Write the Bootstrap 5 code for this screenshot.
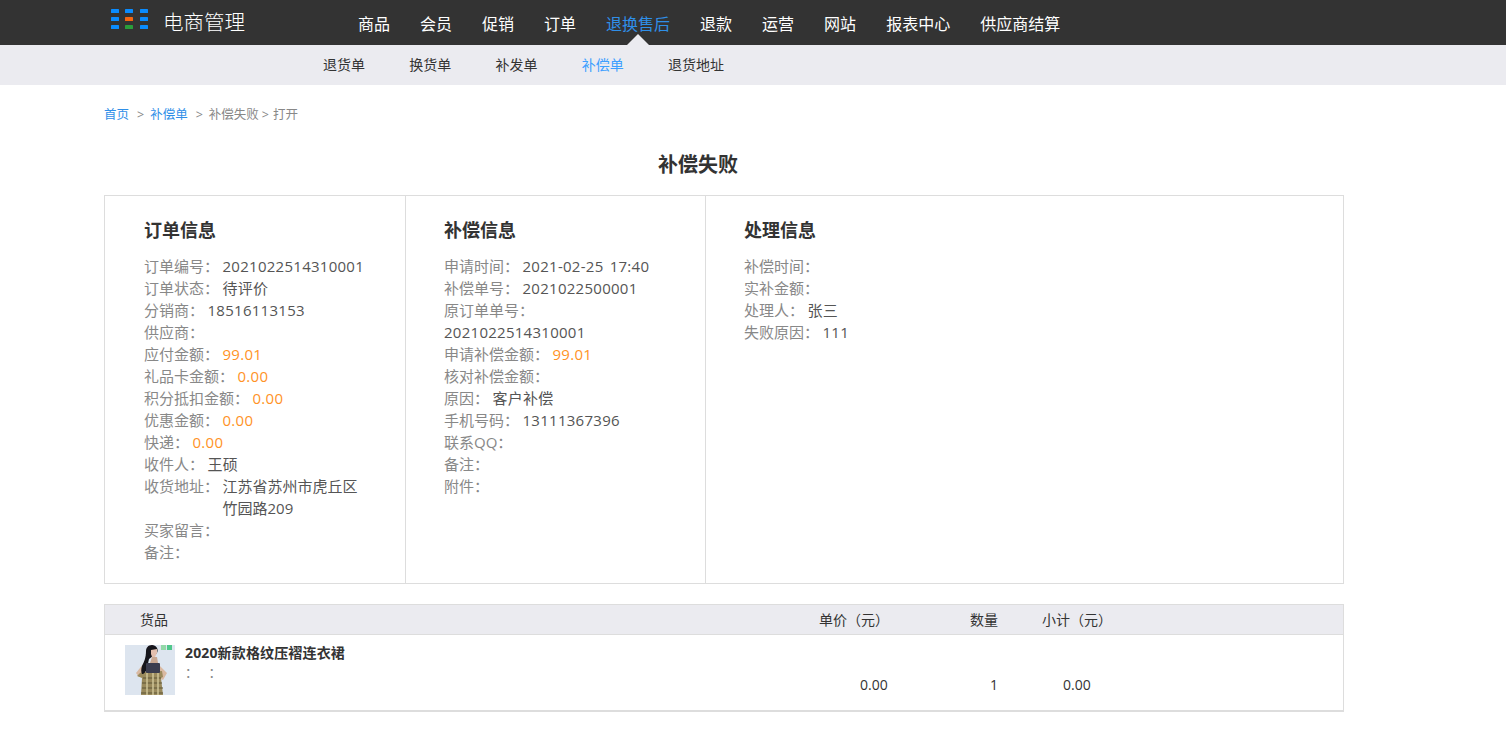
<!DOCTYPE html>
<html lang="zh-CN">
<head>
<meta charset="utf-8">
<title>补偿失败</title>
<link href="https://cdn.jsdelivr.net/npm/bootstrap@5.3.0/dist/css/bootstrap.min.css" rel="stylesheet">
<style>
html,body{overflow:hidden;height:744px}
body{font-family:"Open Sans","Noto Sans CJK SC",sans-serif;color:#333;background:#fff}
.top-bar{background:#333;height:45px;padding:0 0 0 111px!important;flex-wrap:nowrap;justify-content:flex-start!important}
.logo-box{width:247px;height:45px;gap:15px;color:#fff;font-size:20.5px;text-decoration:none;font-weight:300}
.logo-box:hover{color:#fff}
.top-nav{gap:30px;flex-direction:row}
.top-nav .nav-link{color:#fff;font-size:16px;padding:0;line-height:48px;height:45px;position:relative}
.top-nav .nav-link.active{color:#2f8fe8}
.top-nav .nav-link.active::after{content:"";position:absolute;left:50%;bottom:0;margin-left:-11px;border:solid transparent;border-width:0 11px 11px;border-bottom-color:#ebebf0}
.sub-bar{background:#ebebf0;height:40px;padding-left:323px;gap:44.25px}
.sub-bar .nav-link{color:#333;font-size:14px;padding:0;line-height:39px}
.sub-bar .nav-link.active{color:#3e9fff}
.page-wrap{width:1396px}
.crumbs{margin:0;padding:21px 0 0 104px;font-size:12.5px;line-height:18px;color:#888}
.crumbs a{color:#2f8fe8;text-decoration:none}
.crumbs .sep{margin:0 6px 0 8px;color:#888}
.crumbs .sep.tight{margin:0 4px 0 3px}
.page-title{font-size:20px;font-weight:700;line-height:30px;margin:26px 0 15px;text-align:center;color:#333}
.info-panel{margin-left:104px;width:1240px;height:389px;border:1px solid #ddd}
.info-col{padding:21px 36px 0 38px;border-right:1px solid #ddd}
.info-col:last-child{border-right:0}
.col-a{width:301px;padding-left:39px}
.col-b{width:300px}
.col-c{flex:1}
.info-title{font-size:18px;font-weight:700;line-height:26px;margin:0 0 12px;color:#333}
.info-line{font-size:15px;line-height:22px;color:#888;margin:0}
.info-line span{color:#555;margin-left:3.5px;letter-spacing:.27px;word-spacing:2px}
.info-line span.money{color:#ff9326}
.info-line span.wrap-value{margin-left:0}
.addr-line{display:flex}
.addr-line .lab{flex:none;color:#888;margin:0;letter-spacing:0}
.addr-text{letter-spacing:0!important}
.goods-box{margin:20px 0 0 104px;width:1240px;border:1px solid #ddd;border-bottom-width:2px}
.goods-table{margin:0;table-layout:fixed;font-size:14px;color:#333;--bs-table-bg:transparent}
.goods-table th{background:#ebebf0;font-weight:400;height:29px;padding:0;line-height:29px;border-bottom:1px solid #ddd;font-size:14px}
.goods-table td{padding:0;border:0;height:75px;vertical-align:bottom}
.w-goods{width:700px}
.w-price{width:125px}
.w-qty{width:100px}
.th-goods{padding-left:35px!important}
.th-price{padding-left:14px!important}
.th-qty{padding-left:40px!important}
.th-sub{padding-left:12px!important}
.td-price{padding:0 0 15px 55px!important;font-size:14px}
.td-qty{padding:0 0 15px 60px!important;font-size:14px}
.td-sub{padding:0 0 15px 33px!important;font-size:14px}
.goods-cell{display:flex;gap:10px;padding:10px 0 0 20px;height:75px}
.goods-pic{width:50px;height:50px;flex:none;display:block}
.goods-text{margin-top:-1px}
.goods-name{font-size:14px;font-weight:700;line-height:18px;color:#333;letter-spacing:.15px}
.goods-spec{font-size:13px;line-height:20px;color:#888;word-spacing:7px}
</style>
</head>
<body>
<nav class="navbar top-bar">
  <a class="logo-box d-flex align-items-center" href="#">
    <svg width="37" height="20" viewBox="0 0 37 20" class="mb-2"><g fill="#0a8cff"><rect x="0" width="8" height="4" rx=".6"/><rect x="14" width="8" height="4" rx=".6"/><rect x="29" width="8" height="4" rx=".6"/><rect x="0" y="8" width="8" height="4" rx=".6"/><rect x="29" y="8" width="8" height="4" rx=".6"/><rect x="0" y="16" width="8" height="4" rx=".6"/><rect x="29" y="16" width="8" height="4" rx=".6"/></g><rect x="14" y="8" width="8" height="4" rx=".6" fill="#f5650f"/><rect x="14" y="16" width="8" height="4" rx=".6" fill="#2a9d3a"/></svg>
    <span>电商管理</span>
  </a>
  <ul class="nav top-nav">
    <li class="nav-item"><a class="nav-link" href="#">商品</a></li>
    <li class="nav-item"><a class="nav-link" href="#">会员</a></li>
    <li class="nav-item"><a class="nav-link" href="#">促销</a></li>
    <li class="nav-item"><a class="nav-link" href="#">订单</a></li>
    <li class="nav-item"><a class="nav-link active" href="#">退换售后</a></li>
    <li class="nav-item"><a class="nav-link" href="#">退款</a></li>
    <li class="nav-item"><a class="nav-link" href="#">运营</a></li>
    <li class="nav-item"><a class="nav-link" href="#">网站</a></li>
    <li class="nav-item"><a class="nav-link" href="#">报表中心</a></li>
    <li class="nav-item"><a class="nav-link" href="#">供应商结算</a></li>
  </ul>
</nav>
<ul class="nav sub-bar">
  <li class="nav-item"><a class="nav-link" href="#">退货单</a></li>
  <li class="nav-item"><a class="nav-link" href="#">换货单</a></li>
  <li class="nav-item"><a class="nav-link" href="#">补发单</a></li>
  <li class="nav-item"><a class="nav-link active" href="#">补偿单</a></li>
  <li class="nav-item"><a class="nav-link" href="#">退货地址</a></li>
</ul>
<main class="page-wrap">
  <div class="crumbs"><a href="#">首页</a><span class="sep">&gt;</span><a href="#">补偿单</a><span class="sep">&gt;</span>补偿失败<span class="sep tight">&gt;</span>打开</div>
  <h1 class="page-title">补偿失败</h1>
  <section class="info-panel d-flex">
    <div class="info-col col-a">
      <h2 class="info-title">订单信息</h2>
      <p class="info-line">订单编号：<span>2021022514310001</span></p>
      <p class="info-line">订单状态：<span>待评价</span></p>
      <p class="info-line">分销商：<span>18516113153</span></p>
      <p class="info-line">供应商：</p>
      <p class="info-line">应付金额：<span class="money">99.01</span></p>
      <p class="info-line">礼品卡金额：<span class="money">0.00</span></p>
      <p class="info-line">积分抵扣金额：<span class="money">0.00</span></p>
      <p class="info-line">优惠金额：<span class="money">0.00</span></p>
      <p class="info-line">快递：<span class="money">0.00</span></p>
      <p class="info-line">收件人：<span>王硕</span></p>
      <p class="info-line addr-line"><span class="lab">收货地址：</span><span class="addr-text">江苏省苏州市虎丘区竹园路209</span></p>
      <p class="info-line">买家留言：</p>
      <p class="info-line">备注：</p>
    </div>
    <div class="info-col col-b">
      <h2 class="info-title">补偿信息</h2>
      <p class="info-line">申请时间：<span>2021-02-25 17:40</span></p>
      <p class="info-line">补偿单号：<span>2021022500001</span></p>
      <p class="info-line">原订单单号：<span class="wrap-value">2021022514310001</span></p>
      <p class="info-line">申请补偿金额：<span class="money">99.01</span></p>
      <p class="info-line">核对补偿金额：</p>
      <p class="info-line">原因：<span>客户补偿</span></p>
      <p class="info-line">手机号码：<span>13111367396</span></p>
      <p class="info-line">联系QQ：</p>
      <p class="info-line">备注：</p>
      <p class="info-line">附件：</p>
    </div>
    <div class="info-col col-c">
      <h2 class="info-title">处理信息</h2>
      <p class="info-line">补偿时间：</p>
      <p class="info-line">实补金额：</p>
      <p class="info-line">处理人：<span>张三</span></p>
      <p class="info-line">失败原因：<span>111</span></p>
    </div>
  </section>
  <section class="goods-box">
    <table class="table goods-table">
      <colgroup><col class="w-goods"><col class="w-price"><col class="w-qty"><col></colgroup>
      <thead><tr><th class="th-goods">货品</th><th class="th-price">单价（元）</th><th class="th-qty">数量</th><th class="th-sub">小计（元）</th></tr></thead>
      <tbody><tr>
        <td><div class="goods-cell">
          <svg class="goods-pic" viewBox="0 0 50 50">
            <defs><filter id="soft"><feGaussianBlur stdDeviation=".6"/></filter></defs>
            <rect width="50" height="50" fill="#dde5ef"/>
            <rect x="36" y="0" width="5" height="5" fill="#93d8a8"/><rect x="42" y="0" width="5" height="5" fill="#4fc78a"/>
            <g filter="url(#soft)">
              <path d="M11 28l8-10 3 2-5 11-3 1z" fill="#d9b9a2"/>
              <path d="M33 19l9 9-4 7-2-1 1-6-6-5z" fill="#d9b9a2"/>
              <path d="M18 27l19-1 1 6-2 1 2 17H16l1-17-5-2 3-3z" fill="#9a8a5c"/>
              <path d="M18 33h18M17 38h20M17 43h21M16 48h22" stroke="#5c5436" stroke-width="1.2"/>
              <path d="M22 28v22M28 28v22M33 28v22" stroke="#cfc596" stroke-width="1.5"/>
              <path d="M27 0c-4 0-6 3-6 6 0 7-2 11-4 15-1 3-1 6 0 8 2 0 4-2 5-6l2-9 8-6c2-4-1-8-5-8z" fill="#14131a"/>
              <path d="M26 5l6-1 0 4-2 4-3 0-1-3z" fill="#e3bfae"/>
              <path d="M27 12h5l1 6H25z" fill="#c9a892"/>
              <rect x="21" y="18" width="14" height="10" rx="1" fill="#3a3d50"/>
            </g>
          </svg>
          <div class="goods-text"><div class="goods-name">2020新款格纹压褶连衣裙</div><div class="goods-spec">： ：</div></div>
        </div></td>
        <td class="td-price">0.00</td><td class="td-qty">1</td><td class="td-sub">0.00</td>
      </tr></tbody>
    </table>
  </section>
</main>
</body>
</html>
